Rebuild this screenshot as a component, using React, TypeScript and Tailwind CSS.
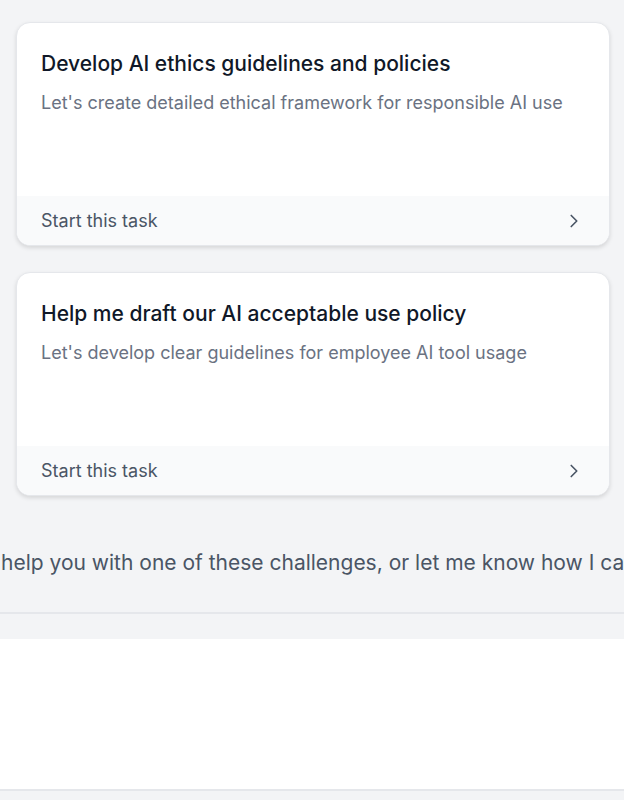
import { ChevronRight } from 'lucide-react';

const tasks = [
    {
        title: 'Develop AI ethics guidelines and policies',
        description: "Let's create detailed ethical framework for responsible AI use",
    },
    {
        title: 'Help me draft our AI acceptable use policy',
        description: "Let's develop clear guidelines for employee AI tool usage",
    },
];

function TaskCard({ title, description }: { title: string; description: string }) {
    return (
        <div className="flex h-[224px] flex-col overflow-hidden rounded-[14px] border border-gray-200 bg-white shadow-[0_2px_4px_rgba(0,0,0,0.12)]">
            <div className="flex-1 px-6 pt-[27px]">
                <h3 className="text-[21px] leading-[28px] font-medium text-gray-900">{title}</h3>
                <p className="mt-[12px] text-[18px] leading-[26px] text-gray-500">{description}</p>
            </div>
            <div className="flex h-[49px] items-center justify-between bg-gray-50 px-6">
                <span className="text-[18px] text-gray-600">Start this task</span>
                <ChevronRight className="h-[22px] w-[22px] text-gray-600" strokeWidth={1.8} />
            </div>
        </div>
    );
}

export default function App() {
    return (
        <div className="flex min-h-[800px] flex-col bg-[#f3f4f6] font-['Inter',sans-serif]">
            <div className="flex flex-col gap-[26px] pt-[22px] pl-4 pr-[14px]">
                {tasks.map(task => (
                    <TaskCard key={task.title} {...task} />
                ))}
            </div>
            <p className="mt-[53px] overflow-hidden pl-px text-[21px] leading-[28px] whitespace-nowrap text-gray-600">
                help you with one of these challenges, or let me know how I can assist you today.
            </p>
            <div className="mt-[35px] h-[27px] border-t-2 border-gray-200" />
            <div className="h-[150px] bg-white" />
            <div className="flex-1 border-t-2 border-gray-200" />
        </div>
    );
}
